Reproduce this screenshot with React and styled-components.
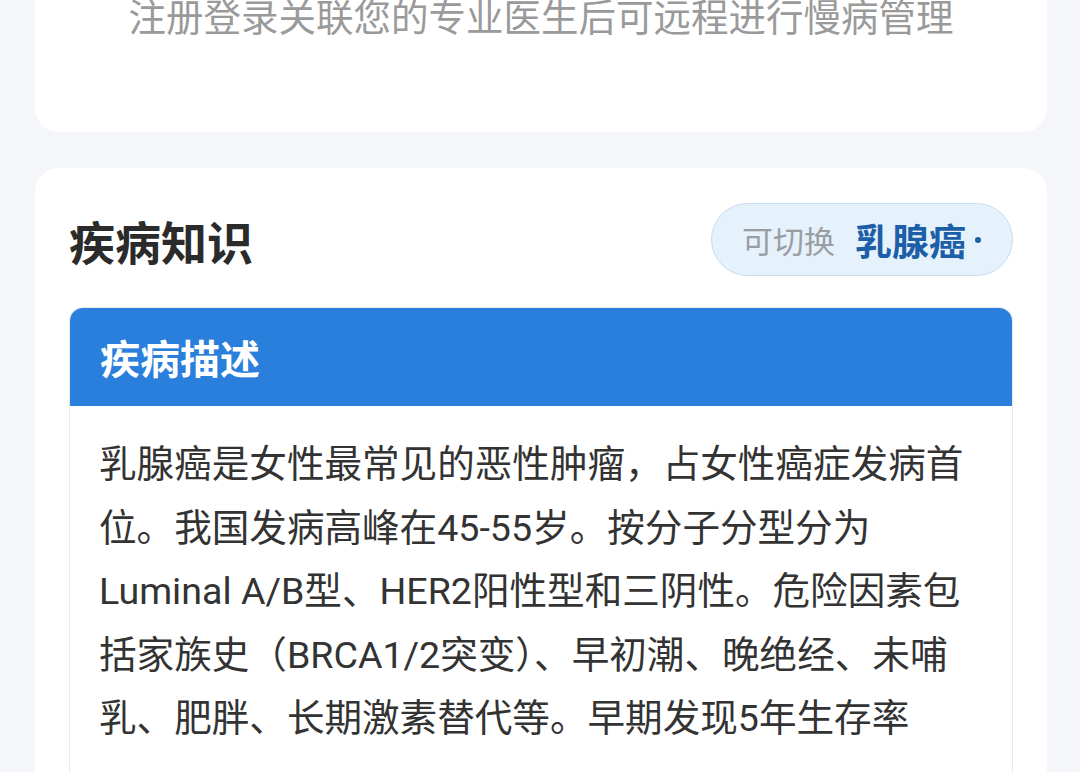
import React from "react";
import styled, { createGlobalStyle } from "styled-components";

const GlobalStyle = createGlobalStyle`
  html, body {
    margin: 0;
    padding: 0;
    background: #f4f6f9;
    font-family: "Roboto", "Noto Sans CJK SC", sans-serif;
  }
`;

const Page = styled.div`
  display: flex;
  flex-direction: column;
  gap: 36px;
  padding: 0 33px 0 35px;
  height: 772px;
  overflow: hidden;
`;

const NoticeCard = styled.section`
  background: #fff;
  border-radius: 0 0 24px 24px;
  height: 132px;
  flex-shrink: 0;
  display: flex;
  justify-content: center;
  align-items: flex-start;
`;

const NoticeText = styled.p`
  margin: -5px 0 0;
  font-size: 37.5px;
  line-height: 40px;
  color: #9a9a9a;
  font-family: "Noto Sans CJK SC", sans-serif;
`;

const KnowledgeCard = styled.section`
  background: #fff;
  border-radius: 24px 24px 0 0;
  padding: 35px 34px 0;
  flex: 1;
`;

const HeaderRow = styled.div`
  display: flex;
  align-items: center;
  justify-content: space-between;
  height: 73px;
  margin-bottom: 31px;
`;

const Title = styled.h2`
  margin: 0;
  font-size: 46px;
  font-weight: 700;
  color: #2b2b2b;
  font-family: "Noto Sans CJK SC", sans-serif;
`;

const SwitchPill = styled.div`
  display: flex;
  align-items: center;
  gap: 20px;
  height: 71px;
  padding: 0 31px 0 30px;
  border-radius: 40px;
  background: #e5f1fb;
  border: 1px solid #c7dcee;
`;

const PillLabel = styled.span`
  font-size: 31px;
  color: #9a9ea3;
  font-family: "Noto Sans CJK SC", sans-serif;
`;

const PillValue = styled.span`
  font-size: 37px;
  font-weight: 700;
  color: #1d5ea8;
  font-family: "Noto Sans CJK SC", sans-serif;
  display: flex;
  align-items: center;
`;

const Dot = styled.span`
  width: 6px;
  height: 6px;
  border-radius: 50%;
  background: #1d5ea8;
  margin-left: 9px;
`;

const InfoBox = styled.div`
  border: 1px solid #e6e8eb;
  border-radius: 14px 14px 0 0;
  overflow: hidden;
`;

const InfoHeader = styled.div`
  background: #2b7fdc;
  height: 98px;
  padding: 0 30px;
  display: flex;
  align-items: center;
  font-size: 40px;
  font-weight: 700;
  color: #fff;
  font-family: "Noto Sans CJK SC", sans-serif;
`;

const InfoBody = styled.p`
  margin: 0;
  padding: 27px 29px;
  font-size: 37.6px;
  line-height: 63.6px;
  color: #333;
`;

export default function App() {
  return (
    <>
      <GlobalStyle />
      <Page>
        <NoticeCard>
          <NoticeText>注册登录关联您的专业医生后可远程进行慢病管理</NoticeText>
        </NoticeCard>
        <KnowledgeCard>
          <HeaderRow>
            <Title>疾病知识</Title>
            <SwitchPill>
              <PillLabel>可切换</PillLabel>
              <PillValue>
                乳腺癌
                <Dot />
              </PillValue>
            </SwitchPill>
          </HeaderRow>
          <InfoBox>
            <InfoHeader>疾病描述</InfoHeader>
            <InfoBody>
              乳腺癌是女性最常见的恶性肿瘤，占女性癌症发病首位。我国发病高峰在45-55岁。按分子分型分为Luminal
              A/B型、HER2阳性型和三阴性。危险因素包括家族史（BRCA1/2突变）、早初潮、晚绝经、未哺乳、肥胖、长期激素替代等。早期发现5年生存率
            </InfoBody>
          </InfoBox>
        </KnowledgeCard>
      </Page>
    </>
  );
}
